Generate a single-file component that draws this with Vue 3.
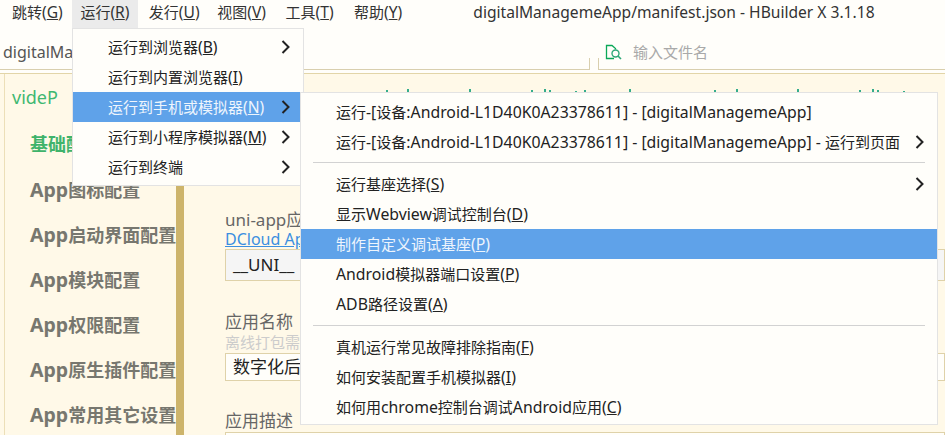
<script setup>
const topMenus = [
  ['跳转', 'G'], ['运行', 'R'], ['发行', 'U'], ['视图', 'V'], ['工具', 'T'], ['帮助', 'Y']
]
const runMenu = [
  { t: '运行到浏览器', k: 'B', more: true },
  { t: '运行到内置浏览器', k: 'I' },
  { t: '运行到手机或模拟器', k: 'N', more: true, on: true },
  { t: '运行到小程序模拟器', k: 'M', more: true },
  { t: '运行到终端', more: true }
]
const groups = [
  [
    { t: '运行-[设备:Android-L1D40K0A23378611] - [digitalManagemeApp]' },
    { t: '运行-[设备:Android-L1D40K0A23378611] - [digitalManagemeApp] - 运行到页面', more: true }
  ],
  [
    { t: '运行基座选择', k: 'S', more: true },
    { t: '显示Webview调试控制台', k: 'D' },
    { t: '制作自定义调试基座', k: 'P', on: true },
    { t: 'Android模拟器端口设置', k: 'P' },
    { t: 'ADB路径设置', k: 'A' }
  ],
  [
    { t: '真机运行常见故障排除指南', k: 'F' },
    { t: '如何安装配置手机模拟器', k: 'I' },
    { t: '如何用chrome控制台调试Android应用', k: 'C' }
  ]
]
const sideItems = ['App图标配置', 'App启动界面配置', 'App模块配置', 'App权限配置', 'App原生插件配置', 'App常用其它设置']
const ticks = [
  [386, 1], [407, 0], [469, 0], [531, 1], [544, 0], [549, 1], [575, 2], [584, 1], [629, 0],
  [714, 1], [736, 0], [797, 0], [859, 1], [872, 0], [877, 1], [903, 2]
]
const parts = (s) =>
  s.split(/([\x00-\x7f]+)/).filter(Boolean).map((x) => ({ x, lat: /^[\x00-\x7f]/.test(x) }))
</script>

<template>
  <div class="app">
    <header class="menubar">
      <div v-for="(m, i) in topMenus" :key="m[1]" class="top-item" :class="{ active: i === 1 }">
        {{ m[0] }}<span class="lat">(<u>{{ m[1] }}</u>)</span>
      </div>
      <div class="title lat">digitalManagemeApp/manifest.json - HBuilder X 3.1.18</div>
    </header>

    <div class="tabbar">
      <div class="tab-left">digitalManagemeApp</div>
      <div class="tab-right">
        <svg class="find-icon" width="17" height="17" viewBox="0 0 17 17" fill="none">
          <path d="M9 14.5H1.5V1.5H7L10.5 4.5V5.5" stroke="#0aa858" stroke-width="1.3" />
          <circle cx="10.5" cy="9.5" r="3.5" stroke="#2fa878" stroke-width="1.4" />
          <path d="M13 12l3 3" stroke="#2fa878" stroke-width="1.6" />
        </svg>
        <span class="find-text">输入文件名</span>
      </div>
    </div>

    <div class="body">
      <div class="gutter"></div>
      <aside class="sidebar">
        <div class="project">videP</div>
        <div class="side-item current">基础配置</div>
        <div v-for="s in sideItems" :key="s" class="side-item">
          <span class="side-lat">App</span>{{ s.slice(3) }}
        </div>
      </aside>
      <div class="divider"></div>
      <main class="form">
        <div class="label">uni-app应用</div>
        <a class="link">DCloud App</a>
        <div class="input id-input">__UNI__</div>
        <div class="label name-label">应用名称</div>
        <div class="hint">离线打包需</div>
        <div class="input name-input">数字化后</div>
        <div class="label desc-label">应用描述</div>
        <div class="input desc-input"></div>
      </main>
    </div>

    <i
      v-for="p in ticks"
      :key="p[0]"
      class="tick"
      :style="{ left: p[0] + 'px', top: 89 + p[1] + 'px', height: 3 - p[1] + 'px' }"
    ></i>

    <nav class="menu run-menu">
      <div v-for="r in runMenu" :key="r.t" class="row" :class="{ on: r.on }">
        <span>{{ r.t }}<span v-if="r.k" class="lat">(<u>{{ r.k }}</u>)</span></span>
        <svg v-if="r.more" class="chev" width="9" height="14" viewBox="0 0 9 14" fill="none">
          <path d="M1.5 1l6 6-6 6" stroke="#222" stroke-width="2" />
        </svg>
      </div>
    </nav>

    <nav class="menu sub-menu">
      <template v-for="(g, gi) in groups" :key="gi">
        <hr v-if="gi > 0" class="sep" />
        <div v-for="r in g" :key="r.t" class="row" :class="{ on: r.on }">
          <span><span v-for="(p, pi) in parts(r.t)" :key="pi" :class="{ lat: p.lat }">{{ p.x }}</span><span v-if="r.k" class="lat">(<u>{{ r.k }}</u>)</span></span>
          <svg v-if="r.more" class="chev" width="9" height="14" viewBox="0 0 9 14" fill="none">
            <path d="M1.5 1l6 6-6 6" stroke="#222" stroke-width="2" />
          </svg>
        </div>
      </template>
    </nav>
  </div>
</template>

<style scoped>
.app {
  position: relative;
  width: 945px;
  height: 435px;
  overflow: hidden;
  background: #fffefa;
  font-family: "Noto Sans", "Noto Sans CJK SC", sans-serif;
  font-size: 15px;
  color: #333;
}
.lat {
  font-size: 15.6px;
}
.menubar {
  display: flex;
  height: 28px;
  padding-left: 4px;
  gap: 2.4px;
  line-height: 25px;
}
.top-item {
  width: 66px;
  padding-left: 8px;
  box-sizing: border-box;
  white-space: nowrap;
}
.top-item.active {
  background: #ebebeb;
}
.title {
  margin-left: 59px;
  white-space: nowrap;
  color: #333;
}
.tabbar {
  display: flex;
  height: 42px;
  box-sizing: border-box;
  margin-bottom: 3px;
}
.tab-left {
  position: relative;
  width: 590px;
  box-sizing: border-box;
  padding: 12px 0 0 3px;
  border-bottom: 1px solid #d9cfae;
  color: #555;
  font-size: 16px;
  line-height: 24px;
  white-space: nowrap;
}
.tab-left::after,
.tab-right::before {
  content: "";
  position: absolute;
  bottom: -1px;
  width: 1px;
  height: 12px;
  background: #d9cfae;
}
.tab-left::after {
  right: 0;
}
.tab-right {
  position: relative;
  flex: 1;
  margin-left: 8px;
  padding: 9px 0 0 7px;
  display: flex;
  align-items: flex-start;
  border-bottom: 1px solid #d9cfae;
}
.tab-right::before {
  left: 0;
}
.find-icon {
  margin-top: 7px;
}
.find-text {
  margin-left: 11px;
  margin-top: 4px;
  color: #a9a9a9;
  line-height: 22px;
}
.body {
  display: flex;
  height: 362px;
  box-sizing: border-box;
  background: #fff9e8;
  border-top: 1px solid #e2d5a8;
}
.gutter {
  width: 5px;
  box-sizing: border-box;
  border-right: 1px solid #ecdfb8;
}
.sidebar {
  width: 171px;
  padding-top: 12px;
  box-sizing: border-box;
  white-space: nowrap;
  overflow: hidden;
}
.project {
  padding-left: 7px;
  height: 22px;
  line-height: 22px;
  margin-bottom: 14.5px;
  font-size: 18px;
  color: #3fb872;
}
.side-item {
  height: 45px;
  line-height: 43px;
  padding-left: 25px;
  font-size: 18px;
  font-weight: 700;
  color: #77776f;
}
.side-lat {
  font-size: 19.5px;
}
.side-item.current {
  color: #3fb36b;
}
.divider {
  width: 8px;
  background: #cdb46b;
}
.form {
  flex: 1;
  min-width: 0;
  padding: 136px 0 0 41px;
  font-size: 17px;
  color: #666;
  white-space: nowrap;
}
.label {
  height: 20px;
  line-height: 20px;
}
.link {
  display: block;
  height: 19px;
  line-height: 19px;
  font-size: 16px;
  color: #3b8fe0;
  text-decoration: underline;
}
.input {
  box-sizing: border-box;
  border: 1px solid #dfd2a9;
  padding-left: 7px;
  color: #222;
  font-size: 17px;
}
.id-input {
  height: 32px;
  line-height: 30px;
  background: #f5f5f5;
}
.name-label {
  margin-top: 31px;
}
.hint {
  height: 21px;
  line-height: 21px;
  font-size: 15px;
  color: #ccc;
}
.name-input {
  height: 28px;
  line-height: 26px;
  background: #fffefa;
}
.desc-label {
  margin-top: 30px;
}
.desc-input {
  margin-top: 1px;
  height: 30px;
  background: #fffefa;
}
.tick {
  position: absolute;
  width: 2px;
  background: #35ad8c;
}
.menu {
  position: absolute;
  box-sizing: border-box;
  background: #fffefa;
  border: 1px solid #e3e3e3;
  color: #222;
}
.run-menu {
  left: 72px;
  top: 28px;
  width: 232px;
  height: 158px;
  padding-top: 3px;
}
.run-menu .chev {
  position: absolute;
  left: 208px;
  top: 8px;
}
.sub-menu {
  left: 300px;
  top: 92px;
  width: 638px;
  height: 333px;
  padding-top: 4px;
}
.sub-menu .chev {
  position: absolute;
  left: 614px;
  top: 8px;
}
.sub-menu .lat {
  font-size: 15.8px;
}
.row {
  position: relative;
  display: flex;
  align-items: center;
  height: 30px;
  box-sizing: border-box;
  padding: 0 0 1px 35px;
  white-space: nowrap;
}
.row.on {
  background: #5fa2e9;
  color: #eef5fd;
}
.run-menu .row.on {
  margin-right: 2px;
}
.sep {
  margin: 5px 12px 6px;
  border: 0;
  height: 1px;
  background: #d2d2d2;
}
.sep:nth-of-type(2) {
  margin-top: 6px;
}
</style>
